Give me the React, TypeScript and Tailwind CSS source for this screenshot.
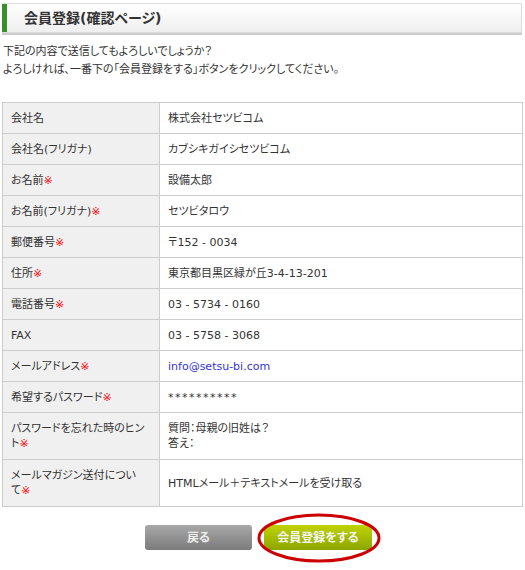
const rows: { label: string[]; required?: boolean; value: React.ReactNode; tall?: boolean }[] = [
  { label: ['会社名'], value: '株式会社セツビコム' },
  { label: ['会社名(フリガナ)'], value: 'カブシキガイシセツビコム' },
  { label: ['お名前'], required: true, value: '設備太郎' },
  { label: ['お名前(フリガナ)'], required: true, value: 'セツビタロウ' },
  { label: ['郵便番号'], required: true, value: '〒152 - 0034' },
  { label: ['住所'], required: true, value: '東京都目黒区緑が丘3-4-13-201' },
  { label: ['電話番号'], required: true, value: '03 - 5734 - 0160' },
  { label: ['FAX'], value: '03 - 5758 - 3068' },
  {
    label: ['メールアドレス'],
    required: true,
    value: <span className="text-[#3333dd]">info@setsu-bi.com</span>,
  },
  {
    label: ['希望するパスワード'],
    required: true,
    value: <span className="tracking-[1.5px]">**********</span>,
  },
  {
    label: ['パスワードを忘れた時のヒン', 'ト'],
    required: true,
    tall: true,
    value: (
      <>
        質問：母親の旧姓は？
        <br />
        答え：
      </>
    ),
  },
  {
    label: ['メールマガジン送付につい', 'て'],
    required: true,
    tall: true,
    value: 'HTMLメール＋テキストメールを受け取る',
  },
];

export default function App() {
  return (
    <div className="w-[525px] h-[570px] bg-white text-[#333] text-[11px] font-['DejaVu_Sans','Noto_Sans_CJK_JP',sans-serif] [font-feature-settings:'palt'] px-[2px] pt-[3px]">
      {/* page title */}
      <div className="flex h-[30px] w-[520px] border border-[#dddddd] border-l-0 bg-gradient-to-b from-white to-[#efefef] shadow-[0_2px_0_#cccccc]">
        <div className="w-[5px] bg-[#3b8f2b]" />
        <h1 className="flex items-center pl-[17px] text-[14px] font-bold text-[#333]">会員登録(確認ページ)</h1>
      </div>

      <p className="mt-[10px] pl-[1px] leading-[18px]">
        下記の内容で送信してもよろしいでしょうか？
        <br />
        よろしければ、一番下の「会員登録をする」ボタンをクリックしてください。
      </p>

      <table className="mt-[23px] w-[521px] border-collapse">
        <tbody>
          {rows.map((row) => (
            <tr key={row.label.join('')} className={row.tall ? 'h-[47px]' : 'h-[31px]'}>
              <th className="w-[157px] border border-[#cccccc] bg-[#f0f0f0] px-[8px] text-left align-middle font-normal leading-[15px]">
                {row.label.map((line, i) => (
                  <span key={i}>
                    {i > 0 && <br />}
                    {line}
                  </span>
                ))}
                {row.required && <span className="text-[#ff0000]">※</span>}
              </th>
              <td className="border border-[#cccccc] px-[8px] align-middle leading-[15px]">{row.value}</td>
            </tr>
          ))}
        </tbody>
      </table>

      <div className="mt-[18px] flex justify-center gap-[12px] pr-[8px]">
        <button className="h-[25px] w-[107px] rounded-[3px] bg-gradient-to-b from-[#a8a8a8] to-[#7c7c7c] text-[12px] font-bold text-[#eeeeee]">
          戻る
        </button>
        <div className="relative">
          <button className="h-[25px] w-[108px] rounded-[3px] bg-gradient-to-b from-[#c0d400] to-[#8ca600] text-[12px] font-bold text-[#f4f4f4]">
            会員登録をする
          </button>
          <svg className="absolute left-[-7px] top-[-12px] pointer-events-none" width="124" height="50" viewBox="0 0 124 50">
            <ellipse cx="62" cy="25" rx="60" ry="23" fill="none" stroke="#cc0000" strokeWidth="3" />
          </svg>
        </div>
      </div>
    </div>
  );
}
